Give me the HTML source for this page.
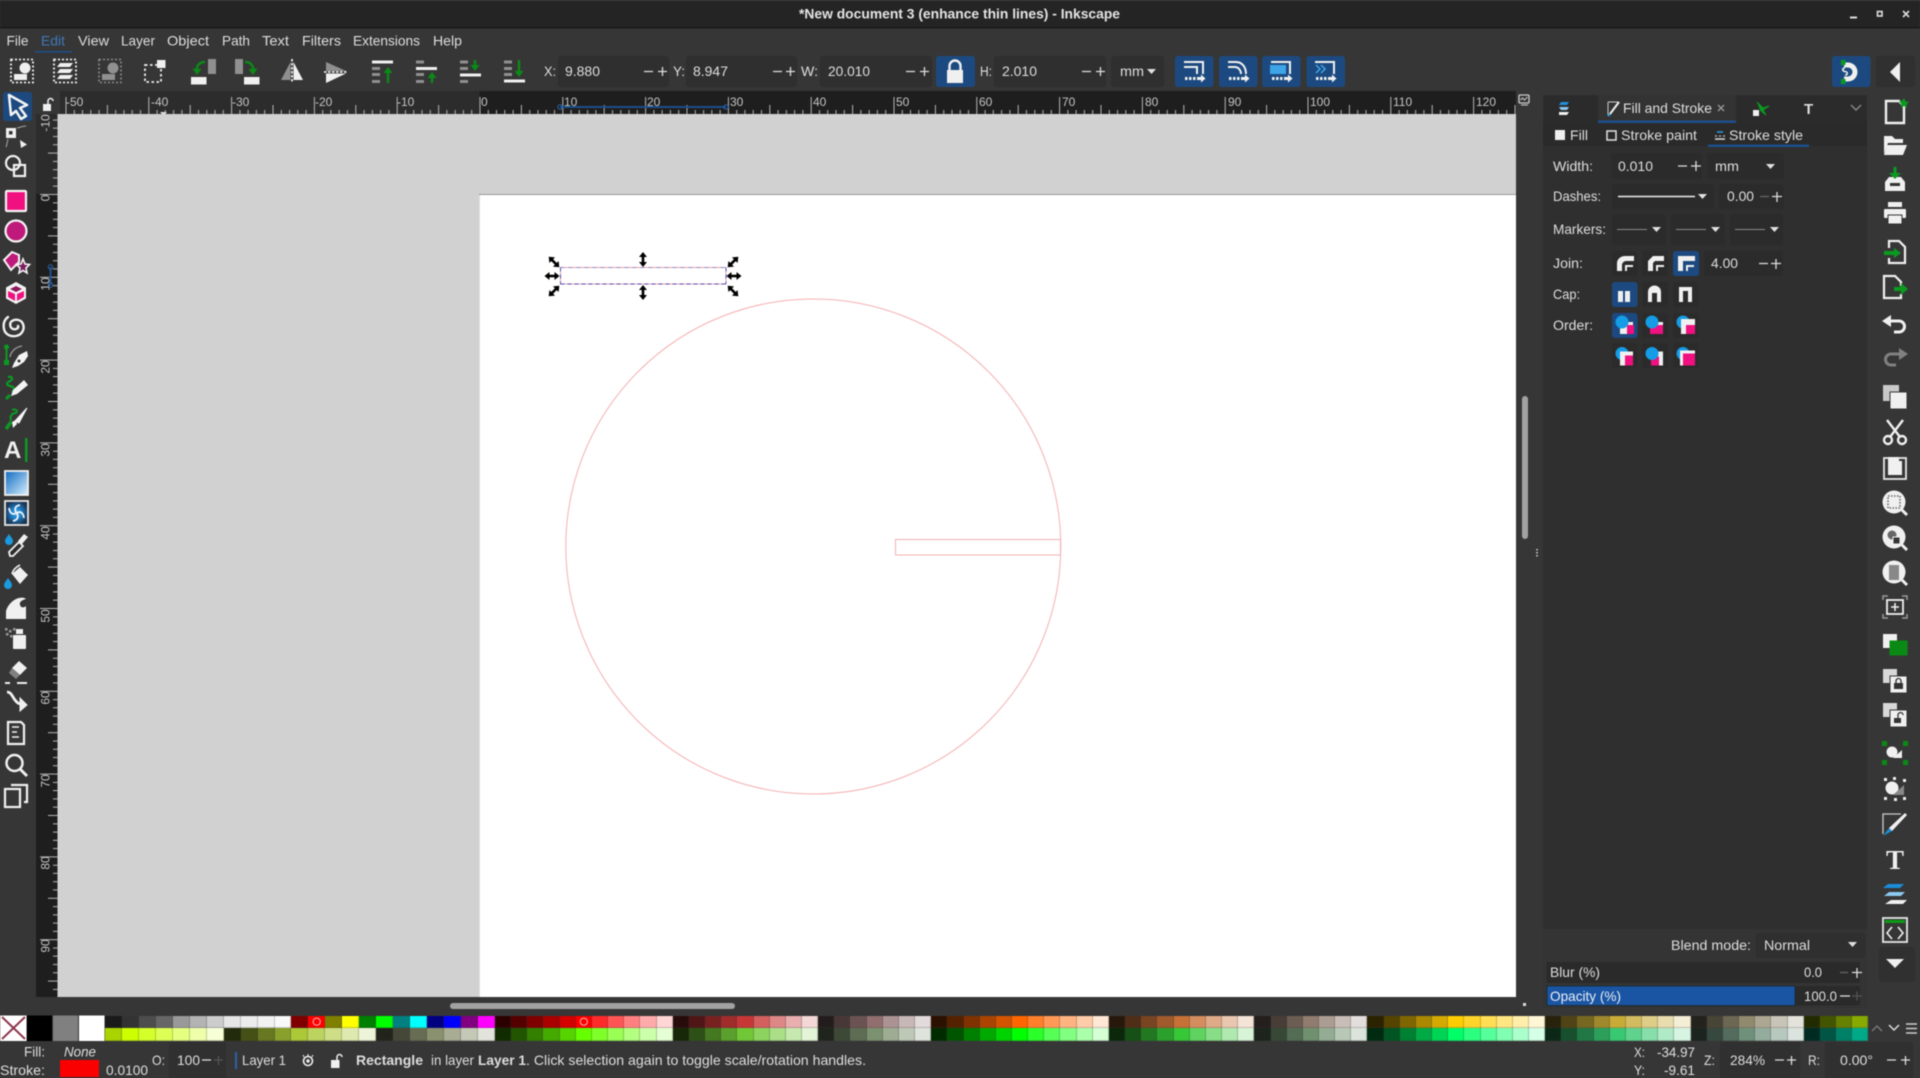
<!DOCTYPE html>
<html><head><meta charset="utf-8"><title>Inkscape</title>
<style>
html,body{margin:0;padding:0;background:#363636;width:1920px;height:1078px;overflow:hidden}
#p{position:absolute;left:0;top:0;width:1920px;height:1078px;filter:blur(.45px);overflow:hidden}
svg{position:absolute;left:0;top:0}
text{font-family:"Liberation Sans",sans-serif;font-size:14px;fill:#dedede}
.s{font-size:12px;fill:#c4c4c4}
.l{stroke:#f0f0f0;fill:none}
.r{position:absolute;display:flex;height:12.8px}
.r i{flex:1;display:block;box-shadow:inset -1px 0 rgba(54,54,54,.25),inset 0 -1px rgba(54,54,54,.25)}
</style></head><body><div id="p">
<svg width="1920" height="1078" viewBox="0 0 1920 1078" xmlns="http://www.w3.org/2000/svg">
<defs>
<pattern id="hr" x="479.500" y="91" width="82.8" height="23" patternUnits="userSpaceOnUse">
<path d="M.5 6V23M41.9 14V23M8.8 19V23M17 19V23M25.3 19V23M33.6 19V23M50.2 19V23M58.5 19V23M66.7 19V23M75 19V23" stroke="#b5b5b5" fill="none"/>
</pattern>
<pattern id="vr" x="36" y="194" width="22" height="82.8" patternUnits="userSpaceOnUse">
<path d="M4 .5H22M12 41.9H22M17 8.8H22M17 17H22M17 25.3H22M17 33.6H22M17 50.2H22M17 58.5H22M17 66.7H22M17 75H22" stroke="#b5b5b5" fill="none"/>
</pattern>
<linearGradient id="gr" x1="0" y1="0" x2="1" y2="1"><stop offset="0" stop-color="#0e68c0"/><stop offset="1" stop-color="#d8f0ff"/></linearGradient>
<radialGradient id="mg"><stop offset="0" stop-color="#35b4ff"/><stop offset=".6" stop-color="#1a6db0"/><stop offset="1" stop-color="#1c3550"/></radialGradient>
<g id="ar"><path d="M0-5V5" stroke="#000" stroke-width="2.6"/><path d="M-4-2.5L0-7.5 4-2.5zM-4 2.5L0 7.5 4 2.5z" fill="#000"/></g>
</defs>

<!-- backgrounds -->
<rect width="1920" height="1078" fill="#363636"/>
<rect width="1920" height="28" fill="#242424"/>
<rect y="0" width="1920" height="1" fill="#3a3a3a"/>
<rect y="27" width="1920" height="1.5" fill="#191919"/>

<!-- title -->
<text x="799" y="18.5" textLength="321" lengthAdjust="spacingAndGlyphs" style="font-weight:700;font-size:14px;fill:#e4e4e4">*New document 3 (enhance thin lines) - Inkscape</text>
<path d="M1850 17.5h7" stroke="#ddd" stroke-width="2"/>
<rect x="1877.5" y="11.5" width="4.5" height="4.5" fill="none" stroke="#ddd" stroke-width="1.6"/>
<path d="M1903 11l6 6M1909 11l-6 6" stroke="#ddd" stroke-width="1.6"/>

<!-- menu -->
<text x="6.5" y="45.5" textLength="22" lengthAdjust="spacingAndGlyphs">File</text>
<text x="41" y="45.5" textLength="24" lengthAdjust="spacingAndGlyphs" style="fill:#3f78b8">Edit</text>
<rect x="35" y="51" width="37" height="1.500" fill="#1c4f8d"/>
<text x="78" y="45.5" textLength="31" lengthAdjust="spacingAndGlyphs">View</text>
<text x="121" y="45.5" textLength="34" lengthAdjust="spacingAndGlyphs">Layer</text>
<text x="167" y="45.5" textLength="42" lengthAdjust="spacingAndGlyphs">Object</text>
<text x="222" y="45.5" textLength="28" lengthAdjust="spacingAndGlyphs">Path</text>
<text x="262" y="45.5" textLength="27" lengthAdjust="spacingAndGlyphs">Text</text>
<text x="302" y="45.5" textLength="39" lengthAdjust="spacingAndGlyphs">Filters</text>
<text x="353" y="45.5" textLength="67" lengthAdjust="spacingAndGlyphs">Extensions</text>
<text x="433" y="45.5" textLength="29" lengthAdjust="spacingAndGlyphs">Help</text>

<!-- toolbar icons -->
<g transform="translate(22,71)"><rect x="-11" y="-11.5" width="22" height="23" fill="none" stroke="#eee" stroke-width="1.8" stroke-dasharray="2 2"/><circle cx="3" cy="-3" r="5.5" fill="#f0f0f0"/><rect x="-8" y="3" width="13" height="6" fill="#f0f0f0"/></g>
<g transform="translate(65,71)"><rect x="-11" y="-11.5" width="22" height="23" fill="none" stroke="#eee" stroke-width="1.8" stroke-dasharray="2 2"/><path d="M-5-8H8L5-4H-8zM-5-2H8L5 2H-8zM-5 4H8L5 8H-8z" fill="#f0f0f0"/></g>
<g transform="translate(110,71)"><rect x="-11" y="-11.5" width="22" height="23" fill="none" stroke="#8a8a8a" stroke-width="1.6" stroke-dasharray="2 2"/><circle cx="3" cy="-3" r="5.5" fill="#909090"/><rect x="-8" y="3" width="13" height="6" fill="#909090"/></g>
<g><rect x="145" y="65" width="16" height="17" fill="none" stroke="#eee" stroke-width="1.8" stroke-dasharray="2.5 2.5"/><rect x="157" y="60" width="8.5" height="8" fill="#f0f0f0"/></g>
<g><rect x="208" y="59" width="8" height="15" fill="#909090"/><rect x="191" y="77" width="15.5" height="7.5" fill="#f0f0f0"/><path d="M205 62C199 62 196 66 197 72" fill="none" stroke="#0b8a16" stroke-width="2.4"/><path d="M192.5 68.5L197 75 201.5 69z" fill="#0b8a16"/></g>
<g><rect x="235" y="59" width="8" height="15" fill="#909090"/><rect x="244" y="77" width="15.5" height="7.5" fill="#f0f0f0"/><path d="M245 62C251 62 254 66 253 72" fill="none" stroke="#0b8a16" stroke-width="2.4"/><path d="M248.500 69L253 75 257.500 68.500z" fill="#0b8a16"/></g>
<g><path d="M290.500 62V80L281 80z" fill="#8f8f8f"/><path d="M293.500 62V80L303 80z" fill="#f0f0f0"/><path d="M292 59V83" stroke="#fff" stroke-width="1.6" stroke-dasharray="2.500 1.500"/></g>
<g><path d="M326 62L346 71H326z" fill="#8f8f8f"/><path d="M326 83L346 73.500H326z" fill="#f0f0f0"/><path d="M324 72H347" stroke="#fff" stroke-width="1.600" stroke-dasharray="2.500 1.500"/></g>
<g fill="#909090"><rect x="372" y="60.500" width="21" height="3" fill="#f0f0f0"/><rect x="372" y="67" width="8" height="3"/><rect x="372" y="73" width="8" height="3"/><rect x="372" y="80" width="8" height="3"/><path d="M388 83V71" stroke="#0b8a16" stroke-width="2.400"/><path d="M383.500 73L388 67 392.500 73z" fill="#0b8a16"/></g>
<g fill="#909090"><rect x="416" y="60.500" width="8" height="3"/><rect x="416" y="67" width="21" height="3" fill="#f0f0f0"/><rect x="416" y="73" width="8" height="3"/><rect x="416" y="80" width="8" height="3"/><path d="M432 83V77" stroke="#0b8a16" stroke-width="2.400"/><path d="M427.500 78L432 72 436.500 78z" fill="#0b8a16"/></g>
<g fill="#909090"><rect x="460" y="60.500" width="8" height="3"/><rect x="460" y="67" width="8" height="3"/><rect x="460" y="73.500" width="21" height="3" fill="#f0f0f0"/><rect x="460" y="80" width="8" height="3"/><path d="M475 60V66" stroke="#0b8a16" stroke-width="2.400"/><path d="M470.500 65L475 71 479.500 65z" fill="#0b8a16"/></g>
<g fill="#909090"><rect x="504" y="60.500" width="8" height="3"/><rect x="504" y="67" width="8" height="3"/><rect x="504" y="73" width="8" height="3"/><rect x="504" y="79.500" width="21" height="3" fill="#f0f0f0"/><path d="M519 60V71" stroke="#0b8a16" stroke-width="2.400"/><path d="M514.500 71L519 77 523.500 71z" fill="#0b8a16"/></g>

<!-- X Y W H fields -->
<g fill="#2f2f2f"><rect x="558" y="56" width="111" height="31" rx="3"/><rect x="686" y="56" width="111" height="31" rx="3"/><rect x="820" y="56" width="112" height="31" rx="3"/><rect x="994" y="56" width="112" height="31" rx="3"/><rect x="1111" y="56" width="53" height="31" rx="3"/></g>
<text x="544" y="76" textLength="12" lengthAdjust="spacingAndGlyphs">X:</text><text x="565" y="76" textLength="35" lengthAdjust="spacingAndGlyphs">9.880</text>
<text x="673" y="76" textLength="12" lengthAdjust="spacingAndGlyphs">Y:</text><text x="693" y="76" textLength="35" lengthAdjust="spacingAndGlyphs">8.947</text>
<text x="801" y="76" textLength="17" lengthAdjust="spacingAndGlyphs">W:</text><text x="828" y="76" textLength="42" lengthAdjust="spacingAndGlyphs">20.010</text>
<text x="980" y="76" textLength="12" lengthAdjust="spacingAndGlyphs">H:</text><text x="1002" y="76" textLength="35" lengthAdjust="spacingAndGlyphs">2.010</text>
<text x="1120" y="76" textLength="24" lengthAdjust="spacingAndGlyphs">mm</text><path d="M1147 69h9l-4.500 5z" fill="#e0e0e0"/>
<path d="M644 71.500h9M658 71.500h9M662.500 67v9M773 71.500h9M786 71.500h9M790.500 67v9M906 71.500h9M920 71.500h9M924.500 67v9M1082 71.500h9M1096 71.500h9M1100.500 67v9" stroke="#dedede" stroke-width="1.300"/>
<rect x="936" y="56" width="39" height="31" rx="3" fill="#1c4a80"/>
<path d="M949.500 71v-5a5.500 5.500 0 0 1 11 0v5" fill="none" stroke="#f0f0f0" stroke-width="2.400"/><rect x="947" y="70" width="16" height="13" fill="#f0f0f0"/>

<!-- blue snap buttons -->
<g fill="#1c4a80"><rect x="1175" y="56" width="38.500" height="31" rx="3"/><rect x="1219" y="56" width="38.500" height="31" rx="3"/><rect x="1262" y="56" width="38.500" height="31" rx="3"/><rect x="1306.500" y="56" width="38.500" height="31" rx="3"/></g>
<g fill="none" stroke="#f0f0f0" stroke-width="2"><path d="M1184 62h19v12M1184 67h13v7"/><path d="M1228 62h8c6 0 10 5 10 12M1228 67h7c3 0 6 3 6 7"/><path d="M1271 62h19v12M1315 62h19v12"/></g>
<rect x="1270" y="65" width="16" height="9" fill="#3ea6e8"/>
<path d="M1316 65l4 4-4 4M1321 65l4 4-4 4" fill="none" stroke="#3ea6e8" stroke-width="1.500"/>
<g fill="#f0f0f0"><rect x="1185" y="77" width="2.500" height="3"/><rect x="1189" y="77" width="2.500" height="3"/><rect x="1193" y="77" width="2.500" height="3"/><path d="M1197 77h4v-2.500l4.500 4-4.500 4V80h-4z"/>
<rect x="1229" y="77" width="2.500" height="3"/><rect x="1233" y="77" width="2.500" height="3"/><rect x="1237" y="77" width="2.500" height="3"/><path d="M1241 77h4v-2.500l4.500 4-4.500 4V80h-4z"/>
<rect x="1272" y="77" width="2.500" height="3"/><rect x="1276" y="77" width="2.500" height="3"/><rect x="1280" y="77" width="2.500" height="3"/><path d="M1284 77h4v-2.500l4.500 4-4.500 4V80h-4z"/>
<rect x="1316" y="77" width="2.500" height="3"/><rect x="1320" y="77" width="2.500" height="3"/><rect x="1324" y="77" width="2.500" height="3"/><path d="M1328 77h4v-2.500l4.500 4-4.500 4V80h-4z"/></g>
<!-- magnet -->
<rect x="1832" y="56" width="38.500" height="31" rx="3" fill="#1c4a80"/>
<path d="M1844 62.500h4a9.500 9.500 0 0 1 0 19h-4v-5h4a4.500 4.500 0 0 0 0-9h-4z" fill="#f0f0f0"/>
<rect x="1841" y="60" width="4.500" height="5" fill="#0b9a20"/><rect x="1841" y="79" width="4.500" height="5" fill="#0b9a20"/>
<path d="M1845 68c-3 0-3 3 0 3.500s3 3.500 0 3.500" fill="none" stroke="#f0f0f0" stroke-width="1.500"/>
<rect x="1876" y="56" width="39" height="31" rx="3" fill="#303030"/>
<path d="M1900 62V82L1890 72z" fill="#f0f0f0"/>

<!-- rulers -->
<rect x="60" y="91" width="420" height="23" fill="#2c2c2c"/>
<rect x="479.500" y="91" width="1036.500" height="23" fill="#1e1e1e"/>
<rect x="60" y="91" width="1456" height="23" fill="url(#hr)"/>
<rect x="36" y="114" width="22" height="80" fill="#2c2c2c"/>
<rect x="36" y="194" width="22" height="803" fill="#1e1e1e"/>
<rect x="36" y="111" width="22" height="886" fill="url(#vr)"/>
<rect x="36" y="91" width="24" height="23" fill="#363636"/>
<g>
<text class="s" x="66" y="106">-50</text><text class="s" x="151" y="106">-40</text><text class="s" x="232" y="106">-30</text><text class="s" x="315" y="106">-20</text><text class="s" x="397" y="106">-10</text><text class="s" x="481" y="106">0</text><text class="s" x="564" y="106">10</text><text class="s" x="647" y="106">20</text><text class="s" x="730" y="106">30</text><text class="s" x="813" y="106">40</text><text class="s" x="896" y="106">50</text><text class="s" x="979" y="106">60</text><text class="s" x="1062" y="106">70</text><text class="s" x="1145" y="106">80</text><text class="s" x="1228" y="106">90</text><text class="s" x="1310" y="106">100</text><text class="s" x="1393" y="106">110</text><text class="s" x="1476" y="106">120</text>
<text class="s" text-anchor="middle" transform="translate(49.500,123) rotate(-90)">-10</text><text class="s" text-anchor="middle" transform="translate(49.500,198) rotate(-90)">0</text><text class="s" text-anchor="middle" transform="translate(49.500,284) rotate(-90)">10</text><text class="s" text-anchor="middle" transform="translate(49.500,367) rotate(-90)">20</text><text class="s" text-anchor="middle" transform="translate(49.500,450) rotate(-90)">30</text><text class="s" text-anchor="middle" transform="translate(49.500,533) rotate(-90)">40</text><text class="s" text-anchor="middle" transform="translate(49.500,616) rotate(-90)">50</text><text class="s" text-anchor="middle" transform="translate(49.500,698) rotate(-90)">60</text><text class="s" text-anchor="middle" transform="translate(49.500,781) rotate(-90)">70</text><text class="s" text-anchor="middle" transform="translate(49.500,863) rotate(-90)">80</text><text class="s" text-anchor="middle" transform="translate(49.500,946) rotate(-90)">90</text>
</g>
<path d="M560 107H726" stroke="#1c4f8d" stroke-width="2"/><circle cx="560" cy="107" r="2.200" fill="none" stroke="#2a66ad"/><circle cx="726" cy="107" r="2.200" fill="none" stroke="#2a66ad"/>
<path d="M50.500 267V285" stroke="#1c4f8d" stroke-width="2"/><circle cx="50.500" cy="267" r="2.200" fill="none" stroke="#2a66ad"/><circle cx="50.500" cy="285" r="2.200" fill="none" stroke="#2a66ad"/>
<path d="M160 112h7l-3.500 4z" fill="#ddd"/>
<!-- ruler lock -->
<rect x="43" y="104" width="8" height="7" fill="#f0f0f0"/><path d="M48 104v-3a2.500 2.500 0 0 1 5 0" fill="none" stroke="#f0f0f0" stroke-width="1.500"/>
<!-- monitor -->
<rect x="1519" y="95" width="10" height="8" rx="1" fill="none" stroke="#ccc" stroke-width="1.300"/><path d="M1520.500 100l2-2 2 2 3-3M1521 105h7" stroke="#ccc" fill="none"/>

<!-- canvas -->
<rect x="57.500" y="114" width="1458.500" height="883" fill="#d1d1d1"/>
<rect x="479" y="194" width="1037" height="803" fill="#fff"/>
<path d="M479 194.500H1516" stroke="#555" stroke-opacity=".6"/>
<path d="M479.500 194V997" stroke="#777" stroke-opacity=".25"/>
<circle cx="813.300" cy="546.500" r="247.500" fill="none" stroke="#f4b0b2" stroke-width="1"/>
<rect x="895.500" y="539.500" width="165" height="15.500" fill="none" stroke="#f4b0b2" stroke-width="1"/>
<rect x="560.500" y="267.500" width="165.500" height="16.500" fill="none" stroke="#f0a0a8" stroke-width="1"/>
<path d="M560.500 267.500H726" fill="none" stroke="#8a8ac8" stroke-dasharray="4 4"/>
<path d="M560.500 284H726M560.500 267.500V284M726 267.500V284" fill="none" stroke="#4a4ab0" stroke-dasharray="4 3"/>
<use href="#ar" transform="translate(643,259.500)"/><use href="#ar" transform="translate(643,292.500)"/>
<use href="#ar" transform="translate(552,276) rotate(90)"/><use href="#ar" transform="translate(734,276) rotate(90)"/>
<use href="#ar" transform="translate(554,262) rotate(-45)"/><use href="#ar" transform="translate(733,262) rotate(45)"/>
<use href="#ar" transform="translate(554,291) rotate(45)"/><use href="#ar" transform="translate(733,291) rotate(-45)"/>

<!-- scrollbars -->
<rect x="450" y="1003" width="285" height="6" rx="3" fill="#a2a2a2"/>
<rect x="1522" y="396" width="6" height="143" rx="3" fill="#a2a2a2"/>
<rect x="1523" y="1003" width="3" height="3" fill="#ddd"/>
<path d="M1537 549v1.500M1537 552v1.500M1537 555v1.500" stroke="#ddd" stroke-width="1.500"/>

<!-- left tools -->
<rect x="3" y="92" width="29" height="29" rx="3" fill="#1c4a80"/>
<path d="M9 95L27 105 20 108 26 116 21 119 16 111 11 115z" fill="#1c4a80" stroke="#f4f4f4" stroke-width="2.500" stroke-linejoin="round"/>
<g transform="translate(16,137)"><rect x="-10" y="-9" width="10" height="10" fill="#f0f0f0"/><rect x="-7" y="-6" width="3.500" height="3.500" fill="#333"/><path d="M1-9C5-10 8-11 10-11M-8 2C-9 6-9 8-10 10" stroke="#aaa" fill="none"/><path d="M4 3L11 7.500 5 11z" fill="#f0f0f0"/></g>
<g transform="translate(16,167)" class="l" stroke-width="2.200"><circle cx="-3" cy="-4" r="7"/><rect x="-2" y="-2" width="11" height="11"/></g>
<rect x="6" y="191" width="20" height="20" rx="1" fill="#f0107f" stroke="#f4f4f4" stroke-width="2.200"/>
<circle cx="16" cy="231" r="10.500" fill="#bf1a7b" stroke="#f4f4f4" stroke-width="2.200"/>
<g transform="translate(15,263)"><path d="M-3-11L4-8 4-1-4 7-11-3z" fill="#bf1a7b" stroke="#f4f4f4" stroke-width="2"/><path d="M8-4L10 1 14.500 1.500 11 5 12 10 8 7.500 4 10 5 5 1.500 1.500 6 1z" fill="#7c2060" stroke="#f4f4f4" stroke-width="1.600"/></g>
<g transform="translate(16,293)"><path d="M0-11L10-5.500V5.500L0 11-10 5.500V-5.500z" fill="#f4f4f4"/><path d="M0-7L6-4 0-1-6-4z" fill="#8a1a5a"/><path d="M-8-2L-1 1V8L-8 4zM8-2L1 1V8L8 4z" fill="#f0107f"/></g>
<path d="M18 326c1 2-2 4-5 3s-4-6-1-8 9-2 11 3-1 11-7 12-11-2-12-7 0-9 4-12" fill="none" stroke="#f0f0f0" stroke-width="2.400" stroke-linecap="round"/>
<g transform="translate(16,357)"><circle cx="-9.500" cy="-10" r="2.500" fill="#0b9a20"/><path d="M-9.500-8V5" stroke="#0b9a20" stroke-width="2"/><rect x="-12" y="3" width="5" height="5" fill="#0b9a20"/><path d="M-6 0C-5-6 0-10 6-11" stroke="#999" stroke-width="1.300" fill="none"/><path d="M11-6L3-2-2 6-4 11 2 9 8 5 12 -1z" fill="#f4f4f4"/><circle cx="3" cy="4" r="1.500" fill="#333"/></g>
<g transform="translate(16,387)"><path d="M-8-10C-4-11-2-8-6-6S-10-2-6-1 0 2-4 5" stroke="#0b9a20" stroke-width="2.200" fill="none"/><path d="M-6 8L-10 12" stroke="#0b9a20" stroke-width="3"/><path d="M-3 3L8-7 12-2 1 7-5 9z" fill="#f4f4f4"/></g>
<g transform="translate(16,418)"><path d="M-4-8C0-10 3-6-1-5S-6-2-5 3" stroke="#0b9a20" stroke-width="2" fill="none"/><path d="M-10 11L-5 4" stroke="#0b9a20" stroke-width="3.500"/><path d="M-1 3L11-10 3 5z" fill="#f4f4f4" stroke="#f4f4f4"/><path d="M-4 4L0 2 1 6-3 10z" fill="#f4f4f4"/></g>
<text x="4" y="458" style="font-weight:700;font-size:24px;fill:#f0f0f0">A</text><rect x="25" y="438" width="2.500" height="24" fill="#0b9a20"/>
<rect x="5" y="471" width="23" height="24" fill="url(#gr)" stroke="#f0f0f0" stroke-width="1.800"/>
<rect x="5" y="501" width="23" height="24" fill="url(#mg)" stroke="#e8e8e8" stroke-width="1.800"/>
<path d="M16.500 513C14 509 15 506 20 505M16.500 513C20 511 23 512 24 518M16.500 513C19 516 18 520 13 521M16.500 513C13 515 10 514 9 508" stroke="#f4f4f4" stroke-width="1.800" fill="none"/>
<g transform="translate(16,545)"><path d="M-7-11c2 3 4 5 4 7a4 4 0 0 1-8 0c0-2 2-4 4-7z" fill="#1a9be0"/><path d="M-6 11L-7 7 3-3 7 1-3 11z" fill="#2c2c2c" stroke="#f0f0f0" stroke-width="1.800"/><path d="M2-4L8-11 12-8 6-1z" fill="#f0f0f0"/></g>
<g transform="translate(16,577)"><path d="M-8 3c2 3 4 5 4 7a4 4 0 0 1-8 0c0-2 2-4 4-7z" fill="#1a9be0" transform="translate(0,-2)"/><path d="M-4-3L4-10 12-2 4 7z" fill="#f0f0f0"/><path d="M-4-3C-3-7 0-10 4-12" stroke="#f0f0f0" stroke-width="1.600" fill="none"/></g>
<path d="M6 619V611C8 604 14 599 19 598 23 597 25 598 26 599 22 600 19 602 20 605 21 608 24 608 26 606V619z" fill="#f0f0f0"/>
<g transform="translate(16,638)"><rect x="-3" y="-3" width="13" height="14" rx="1" fill="#f0f0f0"/><rect x="0" y="-9" width="7" height="5" fill="#f0f0f0"/><g fill="#999"><rect x="-11" y="-10" width="2.500" height="2.500"/><rect x="-7" y="-8" width="2.500" height="2.500"/><rect x="-3" y="-10" width="2.500" height="2.500"/><rect x="-10" y="-5" width="2.500" height="2.500"/><rect x="-6" y="-3" width="2.500" height="2.500"/></g></g>
<g transform="translate(16,672)"><path d="M3-11L11-4 4 3-4-4z" fill="#f0f0f0"/><path d="M-4-4L4 3 0 7-7 1z" fill="#808080"/><path d="M-11 11h5M1 11h10" stroke="#f0f0f0" stroke-width="2"/></g>
<path d="M7 692c4 0 5 4 8 8s5 4 7 4" fill="none" stroke="#f0f0f0" stroke-width="2.800"/><path d="M20 698L27 705 20 711z" fill="#f0f0f0" stroke="#f0f0f0"/>
<g transform="translate(16,733)"><path d="M-8-11H5L8-8V11H-8z" fill="none" stroke="#f0f0f0" stroke-width="2.200"/><path d="M-4-6H3M-4-1H1M-4 4H3" stroke="#f0f0f0" stroke-width="1.600"/></g>
<g transform="translate(16,765)"><circle cx="-1.500" cy="-2" r="8" fill="none" stroke="#f0f0f0" stroke-width="2.500"/><path d="M4 4L11 11" stroke="#f0f0f0" stroke-width="3"/></g>
<g transform="translate(16,796)" fill="none" stroke="#f0f0f0" stroke-width="2.200"><rect x="-11" y="-7" width="15" height="18"/><path d="M-5-11H11V6H8"/></g>

<!-- right panel -->
<rect x="1543" y="95" width="324" height="913" fill="#2f2f2f"/>
<rect x="1543" y="95" width="324" height="27" fill="#2b2b2b"/>
<rect x="1598" y="95" width="138" height="27" fill="#333"/>
<rect x="1543" y="122" width="324" height="24" fill="#2a2a2a"/>
<rect x="1598" y="120.500" width="138" height="2.500" fill="#1c4f8d"/>
<rect x="1708" y="144.500" width="101" height="2.500" fill="#1c4f8d"/>
<rect x="1543" y="929" width="324" height="79" fill="#343434"/>
<g transform="translate(1564,108)"><path d="M-3-6H5L3-3H-5z" fill="#1e90d8"/><path d="M-5-1H5L3 2H-3z" fill="#8dc8ee"/><path d="M-5 4H5L3 7H-5z" fill="#f0f0f0"/></g>
<path d="M1608 102h10M1608 102v13" stroke="#ccc" fill="none"/><path d="M1610 114l9-12" stroke="#f0f0f0" stroke-width="2"/><path d="M1608 116l2-2" stroke="#2a9be0" stroke-width="2"/>
<text x="1623" y="113" textLength="89" lengthAdjust="spacingAndGlyphs">Fill and Stroke</text>
<path d="M1718 105l6 6M1724 105l-6 6" stroke="#999" stroke-width="1.300"/>
<path d="M1757 102l6 6 6-2-6 4 3 5-6-5" fill="#0b9a20" stroke="#0b9a20"/><rect x="1753" y="110" width="6" height="6" fill="#f0f0f0"/>
<text x="1804" y="114" style="font-weight:700;font-size:15px;fill:#ddd">T</text>
<path d="M1851 105l5 5 5-5" fill="none" stroke="#8a8a8a" stroke-width="1.400"/>

<rect x="1555" y="130" width="10" height="10" fill="#f0f0f0"/>
<text x="1570" y="140" textLength="18" lengthAdjust="spacingAndGlyphs">Fill</text>
<rect x="1607" y="131" width="9" height="9" fill="none" stroke="#e0e0e0" stroke-width="1.500"/>
<text x="1621" y="140" textLength="76" lengthAdjust="spacingAndGlyphs">Stroke paint</text>
<path d="M1715 139h10" stroke="#ddd" stroke-width="1.500"/><path d="M1717 132h6" stroke="#2a9be0" stroke-width="1.500"/><path d="M1715 136h2M1719 136h2M1723 136h2" stroke="#ddd"/>
<text x="1729" y="140" textLength="74" lengthAdjust="spacingAndGlyphs">Stroke style</text>

<!-- form -->
<g fill="#2b2b2b"><rect x="1611" y="153" width="91" height="26" rx="3"/><rect x="1707" y="153" width="77" height="26" rx="3"/><rect x="1612" y="184" width="102" height="25" rx="3"/><rect x="1719" y="184" width="65" height="25" rx="3"/><rect x="1612" y="214" width="54" height="31" rx="3"/><rect x="1671" y="214" width="54" height="31" rx="3"/><rect x="1730" y="214" width="53" height="31" rx="3"/><rect x="1704" y="251" width="79" height="25" rx="3"/>
<rect x="1612" y="251" width="25.500" height="25" rx="3"/><rect x="1642" y="251" width="26" height="25" rx="3"/><rect x="1642" y="282" width="26" height="25" rx="3"/><rect x="1673" y="282" width="26" height="25" rx="3"/><rect x="1642" y="313" width="26" height="25" rx="3"/><rect x="1673" y="313" width="26" height="25" rx="3"/><rect x="1612" y="343" width="25.500" height="25" rx="3"/><rect x="1642" y="343" width="26" height="25" rx="3"/><rect x="1673" y="343" width="26" height="25" rx="3"/></g>
<g fill="#1c4a80"><rect x="1673" y="251" width="26" height="25" rx="3"/><rect x="1612" y="282" width="25.500" height="25" rx="3"/><rect x="1612" y="313" width="25.500" height="25" rx="3"/></g>
<text x="1553" y="171" textLength="40" lengthAdjust="spacingAndGlyphs">Width:</text>
<text x="1618" y="171" textLength="35" lengthAdjust="spacingAndGlyphs">0.010</text>
<path d="M1678 166h9M1691 166h10M1696 161v10" stroke="#dedede" stroke-width="1.300"/>
<text x="1715" y="171" textLength="24" lengthAdjust="spacingAndGlyphs">mm</text><path d="M1766 164h9l-4.500 5z" fill="#e0e0e0"/>
<text x="1553" y="201" textLength="48" lengthAdjust="spacingAndGlyphs">Dashes:</text>
<path d="M1618 196.500H1695" stroke="#eee" stroke-width="1.600"/><path d="M1698 194h9l-4.500 5z" fill="#e0e0e0"/>
<text x="1727" y="201" textLength="27" lengthAdjust="spacingAndGlyphs">0.00</text>
<path d="M1760 196.500h9" stroke="#666" stroke-width="1.300"/><path d="M1772 196.500h10M1777 192v10" stroke="#dedede" stroke-width="1.300"/>
<text x="1553" y="234" textLength="53" lengthAdjust="spacingAndGlyphs">Markers:</text>
<path d="M1617 229.500h30M1676 229.500h30M1735 229.500h30" stroke="#8a8a8a"/>
<path d="M1652 227h9l-4.500 5zM1711 227h9l-4.500 5zM1770 227h9l-4.500 5z" fill="#e0e0e0"/>
<text x="1553" y="268" textLength="30" lengthAdjust="spacingAndGlyphs">Join:</text>
<text x="1711" y="268" textLength="27" lengthAdjust="spacingAndGlyphs">4.00</text>
<path d="M1759 263.500h9M1771 263.500h10M1776 259v10" stroke="#dedede" stroke-width="1.300"/>
<text x="1553" y="299" textLength="27" lengthAdjust="spacingAndGlyphs">Cap:</text>
<text x="1553" y="330" textLength="40" lengthAdjust="spacingAndGlyphs">Order:</text>
<!-- join icons -->
<path d="M1617 271V263C1617 259 1621 256 1625 256H1634V261H1626C1624 261 1622 263 1622 265V271z" fill="#f0f0f0"/><path d="M1625 271v-6h8v2h-6v4z" fill="#f0f0f0"/>
<path d="M1648 271V261L1653 256H1664V261H1655L1653 263V271z" fill="#f0f0f0"/><path d="M1656 271v-6h8v2h-6v4z" fill="#f0f0f0"/>
<path d="M1678 271V256H1695V261H1683V271z" fill="#f0f0f0"/><path d="M1686 271v-6h8v2h-6v4z" fill="#f0f0f0"/>
<!-- cap icons -->
<g fill="#f0f0f0"><rect x="1618" y="291" width="5" height="11"/><rect x="1625" y="291" width="5" height="11"/></g>
<path d="M1646 302V292a6.500 6.500 0 0 1 13 0V302H1655V293h-5V302z" fill="#f0f0f0" transform="translate(2,0)"/>
<path d="M1679 302V287H1692V302H1688V291H1683V302z" fill="#f0f0f0"/>
<!-- order icons -->
<g>
<rect x="1620" y="322" width="13" height="12" fill="#f0f0f0"/><rect x="1627" y="325" width="7" height="9" fill="#f0107f"/><circle cx="1622" cy="322" r="6.500" fill="#149ce6"/>
<rect x="1650" y="322" width="13" height="12" fill="#f0107f"/><rect x="1658" y="322" width="5" height="3" fill="#f0f0f0"/><circle cx="1652" cy="322" r="6.500" fill="#149ce6"/>
<circle cx="1683" cy="322" r="6.500" fill="#149ce6"/><rect x="1681" y="319" width="14" height="15" fill="#f0f0f0"/><rect x="1686" y="325" width="9" height="9" fill="#f0107f"/>
<g transform="translate(0,1.500)">
<circle cx="1622" cy="352" r="6.500" fill="#149ce6"/><rect x="1620" y="350" width="13" height="14" fill="#f0f0f0"/><rect x="1625" y="354" width="8" height="10" fill="#f0107f"/>
<rect x="1651" y="350" width="12" height="14" fill="#f0f0f0"/><rect x="1651" y="355" width="8" height="9" fill="#f0107f"/><circle cx="1652" cy="352" r="6.500" fill="#149ce6"/>
<circle cx="1683" cy="352" r="6.500" fill="#149ce6"/><rect x="1680" y="349" width="15" height="15" fill="#f0f0f0"/><rect x="1683" y="352" width="12" height="12" fill="#f0107f"/>
</g></g>
<!-- panel bottom -->
<text x="1671" y="950" textLength="80" lengthAdjust="spacingAndGlyphs">Blend mode:</text>
<rect x="1755.500" y="933" width="110" height="25" rx="3" fill="#2f2f2f"/>
<text x="1764" y="950" textLength="46" lengthAdjust="spacingAndGlyphs">Normal</text>
<path d="M1848 942h9l-4.500 5z" fill="#e0e0e0"/>
<rect x="1546.500" y="962" width="313.500" height="21" fill="#2a2a2a"/>
<text x="1550" y="977" textLength="50" lengthAdjust="spacingAndGlyphs">Blur (%)</text>
<text x="1804" y="977" textLength="18" lengthAdjust="spacingAndGlyphs">0.0</text>
<path d="M1840 972.500h8" stroke="#666" stroke-width="1.300"/><path d="M1852 972.500h10M1857 968v10" stroke="#dedede" stroke-width="1.300"/>
<rect x="1546.500" y="986" width="313.500" height="19.500" fill="#2a2a2a"/>
<rect x="1547" y="986" width="248" height="19.500" fill="#1a55a3" stroke="#122" stroke-width=".6"/>
<text x="1550" y="1001" textLength="71" lengthAdjust="spacingAndGlyphs" style="fill:#e8eef8">Opacity (%)</text>
<text x="1804" y="1001" textLength="33" lengthAdjust="spacingAndGlyphs">100.0</text>
<path d="M1840 996h10" stroke="#dedede" stroke-width="1.300"/><path d="M1852 996h10M1857 991.500v9" stroke="#555" stroke-width="1.300"/>

<!-- right toolbar -->
<g transform="translate(1895,112)"><path d="M-9-11H4L9-6V11H-9z" fill="#363636" stroke="#f0f0f0" stroke-width="2.400"/><path d="M9-14l1.500 3.500 3.500.5-2.500 2.500.5 3.500-3-2-3 2 .5-3.500L4-11l3.500-.5z" fill="#0b9a20"/></g>
<g transform="translate(1895,145)"><path d="M-11-9H-3L0-6H8V-2H-7L-11 9z" fill="#f0f0f0"/><path d="M-8 0H12L8 10H-11z" fill="#f0f0f0"/></g>
<g transform="translate(1895,180)"><path d="M-10 2L-6-3H6L10 2V11H-10z" fill="#f0f0f0"/><rect x="-5" y="3" width="10" height="3" fill="#333"/><path d="M0-13V-4" stroke="#0b9a20" stroke-width="3"/><path d="M-6-7L0-1 6-7z" fill="#0b9a20"/></g>
<g transform="translate(1895,213)" fill="#f0f0f0"><rect x="-7" y="-11" width="14" height="5"/><rect x="-11" y="-4" width="22" height="9" rx="1"/><rect x="-7" y="2" width="14" height="9" stroke="#333"/></g>
<g transform="translate(1895,252)"><path d="M-6-4V-11H4L10-5V11H-6V6" fill="none" stroke="#f0f0f0" stroke-width="2.200"/><path d="M-11-1H-1V-4L6 1-1 6V3H-11z" fill="#0b9a20"/></g>
<g transform="translate(1895,287)"><path d="M6-1V-5L0-11H-11V11H6V7" fill="none" stroke="#f0f0f0" stroke-width="2.200"/><path d="M-1 0H6V-4L13 2 6 8V4H-1z" fill="#0b9a20"/></g>
<g transform="translate(1895,325)" fill="none" stroke="#f0f0f0" stroke-width="3"><path d="M-8-4H4A5.500 5.500 0 0 1 4 7H-1"/></g><path d="M1882 321L1891 315V327z" fill="#f0f0f0"/>
<g transform="translate(1895,358)" fill="none" stroke="#808080" stroke-width="3"><path d="M8-4H-4A5.500 5.500 0 0 0-4 7H1"/></g><path d="M1908 354L1899 348V360z" fill="#808080"/>
<g transform="translate(1895,397)"><rect x="-12" y="-12" width="16" height="16" fill="#c8c8c8"/><rect x="-5" y="-5" width="17" height="17" fill="#f0f0f0" stroke="#363636"/></g>
<g transform="translate(1895,432)" fill="none" stroke="#f0f0f0" stroke-width="2.400"><circle cx="-7" cy="8" r="4"/><circle cx="7" cy="8" r="4"/><path d="M-5 5L8-12M5 5L-8-12"/></g>
<g transform="translate(1895,467)"><rect x="-11" y="-9" width="22" height="21" fill="none" stroke="#e8e8e8" stroke-width="1.800"/><path d="M-7-10H4V-6H7V8H-7z" fill="#f0f0f0"/></g>
<g transform="translate(1895,503)"><circle cx="-1" cy="-1" r="11.500" fill="#f0f0f0"/><rect x="-7" y="-7" width="12" height="12" fill="none" stroke="#666" stroke-width="1.600" stroke-dasharray="1.500 1.500"/><path d="M7 7L12 12" stroke="#f0f0f0" stroke-width="3"/></g>
<g transform="translate(1895,538)"><circle cx="-1" cy="-1" r="11.500" fill="#f0f0f0"/><circle cx="-3" cy="-3" r="4.500" fill="#666"/><rect x="-2" y="-1" width="7" height="7" fill="#363636" stroke="#f0f0f0"/><path d="M7 7L12 12" stroke="#f0f0f0" stroke-width="3"/></g>
<g transform="translate(1895,573)"><circle cx="-1" cy="-1" r="11.500" fill="#f0f0f0"/><rect x="-6" y="-8" width="10" height="15" fill="#888"/><path d="M7 7L12 12" stroke="#f0f0f0" stroke-width="3"/></g>
<g transform="translate(1895,607)"><path d="M-12-7V-11H-7M7-11H12V-7M12 7V11H7M-7 11H-12V7" fill="none" stroke="#999" stroke-width="1.500"/><rect x="-8" y="-7" width="16" height="14" fill="none" stroke="#f0f0f0" stroke-width="1.800"/><path d="M-4 0H4M0-4V4" stroke="#f0f0f0" stroke-width="1.600"/></g>
<g transform="translate(1895,646)"><rect x="-12" y="-12" width="14" height="14" fill="#f0f0f0"/><rect x="-5" y="-5" width="17" height="14" fill="#0a8a14" stroke="#0a8a14"/></g>
<g transform="translate(1895,681)"><rect x="-12" y="-12" width="14" height="14" fill="#d8d8d8"/><rect x="-5" y="-5" width="17" height="17" fill="#f0f0f0" stroke="#363636"/><rect x="-1" y="2" width="9" height="6" fill="#333"/><path d="M1 2V0a2.500 2.500 0 0 1 5 0V2" fill="none" stroke="#333" stroke-width="1.300"/></g>
<g transform="translate(1895,715)"><rect x="-12" y="-12" width="14" height="14" fill="#d8d8d8"/><rect x="-5" y="-5" width="17" height="17" fill="#f0f0f0" stroke="#363636"/><rect x="-1" y="3" width="7" height="5" fill="#333"/><path d="M3 3V0a2.500 2.500 0 0 1 5 0" fill="none" stroke="#333" stroke-width="1.300"/></g>
<g transform="translate(1895,752)"><g fill="#0a8a14"><rect x="-13" y="-11" width="5" height="5"/><rect x="8" y="-11" width="5" height="5"/><rect x="-13" y="8" width="5" height="5"/><rect x="8" y="8" width="5" height="5"/></g><circle cx="-3" cy="0" r="5.500" fill="#f0f0f0"/><path d="M-2 6H7V-2z" fill="#f0f0f0"/></g>
<g transform="translate(1895,788)"><g fill="#f0f0f0"><rect x="-11" y="-10" width="3" height="3"/><rect x="-2" y="-11" width="3" height="3"/><rect x="8" y="-9" width="3" height="3"/><rect x="-11" y="9" width="3" height="3"/><rect x="-1" y="10" width="3" height="3"/><rect x="8" y="9" width="3" height="3"/></g><circle cx="-3" cy="0" r="6.500" fill="#f0f0f0"/><path d="M-2 7H9V-3z" fill="#888"/></g>
<g transform="translate(1895,824)"><path d="M6-10H-12V10" fill="none" stroke="#ccc" stroke-width="1.300"/><path d="M-6 4L10-11 12-9-3 7z" fill="#f0f0f0"/><path d="M-12 12L-6 4-3 7z" fill="#1a8ed8"/></g>
<text x="1886" y="869" style="font-family:'Liberation Serif',serif;font-weight:700;font-size:27px;fill:#f0f0f0">T</text>
<g transform="translate(1895,895)"><path d="M-7-11H9L5-7H-12z" fill="#1a8ed8"/><path d="M-6-3H10L6 1H-11z" fill="#8dc8ee"/><path d="M-4 5H12L8 9H-10z" fill="#f0f0f0"/></g>
<g transform="translate(1895,930)"><rect x="-12" y="-12" width="24" height="24" fill="none" stroke="#e8e8e8" stroke-width="1.800"/><rect x="-10" y="-10" width="20" height="3" fill="#0a9a14"/><path d="M-3-3L-8 3-3 9M3-3L8 3 3 9" fill="none" stroke="#f0f0f0" stroke-width="1.600"/></g>
<rect x="1879" y="947" width="36" height="35" rx="3" fill="#303030"/>
<path d="M1886 959h18l-9 9z" fill="#f0f0f0"/>

<!-- swatches -->
<rect x="0" y="1015.500" width="26.500" height="25.500" fill="#fff"/>
<path d="M2 1017L25 1039M25 1017L2 1039" stroke="#8d3a4e" stroke-width="2"/>
<rect x="27" y="1015.500" width="25" height="25.500" fill="#000"/>
<rect x="53" y="1015.500" width="25" height="25.500" fill="#808080"/>
<rect x="79" y="1015.500" width="25.500" height="25.500" fill="#fff"/>

<!-- palette controls -->
<path d="M1872 1031l5-5 5 5" fill="none" stroke="#777" stroke-width="1.500"/>
<path d="M1889 1025l5 5 5-5" fill="none" stroke="#ddd" stroke-width="1.500"/>
<path d="M1906 1024h11M1906 1028.500h11M1906 1033h11" stroke="#ccc" stroke-width="1.600"/>

<!-- status -->
<text x="24" y="1056.500" textLength="21" lengthAdjust="spacingAndGlyphs">Fill:</text>
<text x="64" y="1056.500" textLength="32" lengthAdjust="spacingAndGlyphs" style="font-style:italic">None</text>
<text x="0" y="1075" textLength="45" lengthAdjust="spacingAndGlyphs">Stroke:</text>
<rect x="60" y="1060" width="39" height="17" fill="#fb0000"/>
<text x="106" y="1075" textLength="42" lengthAdjust="spacingAndGlyphs">0.0100</text>
<text x="152" y="1065" textLength="13" lengthAdjust="spacingAndGlyphs">O:</text>
<rect x="169" y="1042" width="57" height="36" rx="2" fill="#303030"/>
<text x="177" y="1065" textLength="23" lengthAdjust="spacingAndGlyphs">100</text>
<path d="M202 1060h9" stroke="#dedede" stroke-width="1.300"/><path d="M214 1060h9M218.500 1056v9" stroke="#555" stroke-width="1.300"/>
<rect x="235" y="1052" width="2" height="17" fill="#2d62a8"/>
<text x="242" y="1065" textLength="44" lengthAdjust="spacingAndGlyphs">Layer 1</text>
<g transform="translate(308,1060)"><circle cx="0" cy="1" r="4.500" fill="none" stroke="#eee" stroke-width="1.600"/><circle cx="0" cy="1" r="1.700" fill="#eee"/><path d="M-4-3L-5-5M0-4V-6M4-3L5-5" stroke="#eee"/></g>
<rect x="331" y="1060" width="8.500" height="8" fill="#f0f0f0"/><path d="M337 1060v-3a2.500 2.500 0 0 1 5 0" fill="none" stroke="#f0f0f0" stroke-width="1.500"/>
<text x="356" y="1065" textLength="67" lengthAdjust="spacingAndGlyphs" style="font-weight:700">Rectangle</text>
<text x="431" y="1065" textLength="43" lengthAdjust="spacingAndGlyphs">in layer</text>
<text x="478" y="1065" textLength="48" lengthAdjust="spacingAndGlyphs" style="font-weight:700">Layer 1</text>
<text x="526" y="1065" textLength="340" lengthAdjust="spacingAndGlyphs">. Click selection again to toggle scale/rotation handles.</text>
<text x="1634" y="1057" textLength="11" lengthAdjust="spacingAndGlyphs">X:</text><text x="1657" y="1057" textLength="38" lengthAdjust="spacingAndGlyphs">-34.97</text>
<text x="1634" y="1075" textLength="11" lengthAdjust="spacingAndGlyphs">Y:</text><text x="1664" y="1075" textLength="31" lengthAdjust="spacingAndGlyphs">-9.61</text>
<text x="1704" y="1065" textLength="11" lengthAdjust="spacingAndGlyphs">Z:</text>
<rect x="1720" y="1042" width="80" height="36" rx="2" fill="#303030"/>
<text x="1730" y="1065" textLength="35" lengthAdjust="spacingAndGlyphs">284%</text>
<path d="M1775 1060h9M1787 1060h9M1791.500 1056v9" stroke="#dedede" stroke-width="1.300"/>
<text x="1808" y="1065" textLength="12" lengthAdjust="spacingAndGlyphs">R:</text>
<rect x="1825" y="1042" width="88" height="36" rx="2" fill="#303030"/>
<text x="1840" y="1065" textLength="33" lengthAdjust="spacingAndGlyphs">0.00°</text>
<path d="M1887 1060h9M1901 1060h9M1905.500 1056v9" stroke="#dedede" stroke-width="1.300"/>
</svg>

<!-- palette rows -->
<div class="r" style="left:105px;top:1015.500px;width:390px"><i style="background:#1a1a1a"></i><i style="background:#333"></i><i style="background:#4d4d4d"></i><i style="background:#666"></i><i style="background:#999"></i><i style="background:#b3b3b3"></i><i style="background:#ccc"></i><i style="background:#e6e6e6"></i><i style="background:#ececec"></i><i style="background:#f2f2f2"></i><i style="background:#f9f9f9"></i><i style="background:#800000"></i><i style="background:#f00"></i><i style="background:#808000"></i><i style="background:#ff0"></i><i style="background:#008000"></i><i style="background:#0f0"></i><i style="background:#008080"></i><i style="background:#0ff"></i><i style="background:#000080"></i><i style="background:#00f"></i><i style="background:#800080"></i><i style="background:#f0f"></i></div>
<div class="r" style="left:105px;top:1028.300px;width:390px"><i style="background:#aad400"></i><i style="background:#cf0"></i><i style="background:#d4ff2a"></i><i style="background:#df5"></i><i style="background:#e5ff80"></i><i style="background:#efa"></i><i style="background:#f6ffd5"></i><i style="background:#222b0b"></i><i style="background:#445016"></i><i style="background:#677821"></i><i style="background:#89a02c"></i><i style="background:#abc837"></i><i style="background:#bcd35f"></i><i style="background:#cdde87"></i><i style="background:#dde9af"></i><i style="background:#eef4d7"></i><i style="background:#22241c"></i><i style="background:#454837"></i><i style="background:#676c53"></i><i style="background:#8a916f"></i><i style="background:#a7ac93"></i><i style="background:#c4c8b7"></i><i style="background:#e2e3db"></i></div>
<div class="r" style="left:495px;top:1015.500px;width:1373.600px"><i style="background:#2b0000"></i><i style="background:#500"></i><i style="background:#800000"></i><i style="background:#a00"></i><i style="background:#d40000"></i><i style="background:#f00"></i><i style="background:#ff2a2a"></i><i style="background:#f55"></i><i style="background:#ff8080"></i><i style="background:#faa"></i><i style="background:#ffd5d5"></i><i style="background:#280b0b"></i><i style="background:#501616"></i><i style="background:#782121"></i><i style="background:#a02c2c"></i><i style="background:#c83737"></i><i style="background:#d35f5f"></i><i style="background:#de8787"></i><i style="background:#e9afaf"></i><i style="background:#f4d7d7"></i><i style="background:#241c1c"></i><i style="background:#483737"></i><i style="background:#6c5353"></i><i style="background:#916f6f"></i><i style="background:#ac9393"></i><i style="background:#c8b7b7"></i><i style="background:#e3dbdb"></i><i style="background:#2b1100"></i><i style="background:#520"></i><i style="background:#803300"></i><i style="background:#a40"></i><i style="background:#d45500"></i><i style="background:#f60"></i><i style="background:#ff7f2a"></i><i style="background:#f95"></i><i style="background:#ffb380"></i><i style="background:#fca"></i><i style="background:#ffe6d5"></i><i style="background:#28170b"></i><i style="background:#502d16"></i><i style="background:#784421"></i><i style="background:#a05a2c"></i><i style="background:#c87137"></i><i style="background:#d38d5f"></i><i style="background:#deaa87"></i><i style="background:#e9c6af"></i><i style="background:#f4e3d7"></i><i style="background:#241f1c"></i><i style="background:#483e37"></i><i style="background:#6c5d53"></i><i style="background:#917c6f"></i><i style="background:#ac9d93"></i><i style="background:#c8beb7"></i><i style="background:#e3dedb"></i><i style="background:#2b2200"></i><i style="background:#540"></i><i style="background:#806600"></i><i style="background:#a80"></i><i style="background:#d4aa00"></i><i style="background:#fc0"></i><i style="background:#ffd42a"></i><i style="background:#fd5"></i><i style="background:#ffe680"></i><i style="background:#fea"></i><i style="background:#fff6d5"></i><i style="background:#28220b"></i><i style="background:#504416"></i><i style="background:#786721"></i><i style="background:#a0892c"></i><i style="background:#c8ab37"></i><i style="background:#d3bc5f"></i><i style="background:#decd87"></i><i style="background:#e9ddaf"></i><i style="background:#f4eed7"></i><i style="background:#24221c"></i><i style="background:#484537"></i><i style="background:#6c6753"></i><i style="background:#918a6f"></i><i style="background:#aca793"></i><i style="background:#c8c4b7"></i><i style="background:#e3e2db"></i><i style="background:#222b00"></i><i style="background:#450"></i><i style="background:#668000"></i><i style="background:#8a0"></i></div>
<div class="r" style="left:495px;top:1028.300px;width:1373.600px"><i style="background:#112b00"></i><i style="background:#250"></i><i style="background:#338000"></i><i style="background:#4a0"></i><i style="background:#55d400"></i><i style="background:#6f0"></i><i style="background:#7fff2a"></i><i style="background:#9f5"></i><i style="background:#b3ff80"></i><i style="background:#cfa"></i><i style="background:#e5ffd5"></i><i style="background:#172808"></i><i style="background:#2d5016"></i><i style="background:#447821"></i><i style="background:#5aa02c"></i><i style="background:#71c837"></i><i style="background:#8dd35f"></i><i style="background:#aade87"></i><i style="background:#c6e9af"></i><i style="background:#e3f4d7"></i><i style="background:#1f241c"></i><i style="background:#3e4837"></i><i style="background:#5d6c53"></i><i style="background:#7c916f"></i><i style="background:#9dac93"></i><i style="background:#bec8b7"></i><i style="background:#dee3db"></i><i style="background:#002b00"></i><i style="background:#050"></i><i style="background:#008000"></i><i style="background:#0a0"></i><i style="background:#00d400"></i><i style="background:#0f0"></i><i style="background:#2aff2a"></i><i style="background:#5f5"></i><i style="background:#80ff80"></i><i style="background:#afa"></i><i style="background:#d5ffd5"></i><i style="background:#0b280b"></i><i style="background:#165016"></i><i style="background:#217821"></i><i style="background:#2ca02c"></i><i style="background:#37c837"></i><i style="background:#5fd35f"></i><i style="background:#87de87"></i><i style="background:#afe9af"></i><i style="background:#d7f4d7"></i><i style="background:#1c241c"></i><i style="background:#374837"></i><i style="background:#536c53"></i><i style="background:#6f916f"></i><i style="background:#93ac93"></i><i style="background:#b7c8b7"></i><i style="background:#dbe3db"></i><i style="background:#002b11"></i><i style="background:#052"></i><i style="background:#008033"></i><i style="background:#0a4"></i><i style="background:#00d455"></i><i style="background:#0f6"></i><i style="background:#2aff80"></i><i style="background:#5f9"></i><i style="background:#80ffb3"></i><i style="background:#afc"></i><i style="background:#d5ffe6"></i><i style="background:#0b2817"></i><i style="background:#16502d"></i><i style="background:#217844"></i><i style="background:#2ca05a"></i><i style="background:#37c871"></i><i style="background:#5fd38d"></i><i style="background:#87deaa"></i><i style="background:#afe9c6"></i><i style="background:#d7f4e3"></i><i style="background:#1c241f"></i><i style="background:#37483e"></i><i style="background:#536c5d"></i><i style="background:#6f917c"></i><i style="background:#93ac9d"></i><i style="background:#b7c8be"></i><i style="background:#dbe3de"></i><i style="background:#002b22"></i><i style="background:#054"></i><i style="background:#008066"></i><i style="background:#0a8"></i></div>
<svg width="1920" height="1078" style="pointer-events:none"><circle cx="316.700" cy="1021.700" r="3.600" fill="none" stroke="#ffb0b0" stroke-width="1"/><circle cx="583.800" cy="1021.700" r="3.600" fill="none" stroke="#ffb0b0" stroke-width="1"/></svg>
</div></body></html>
